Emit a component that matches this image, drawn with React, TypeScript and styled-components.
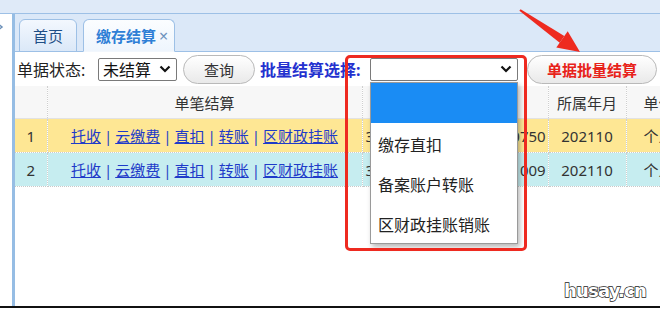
import React from 'react';
import styled, {createGlobalStyle} from 'styled-components';

const GlobalStyle = createGlobalStyle`
  html, body {
    margin: 0;
    padding: 0;
    background: #fff;
  }
  body {
    width: 660px;
    height: 312px;
    overflow: hidden;
    font-family: "Noto Sans", "Noto Sans CJK SC", sans-serif;
    font-size: 15px;
    color: #333;
  }
`;

const Page = styled.div`
  position: relative;
  width: 660px;
  height: 312px;
  display: flex;
  flex-direction: column;
  overflow: hidden;
`;

const TopStrip = styled.div`
  height: 13px;
  flex-shrink: 0;
  background: #dfeaf8;
  border-bottom: 1px solid #9dc0e6;
`;

const Body = styled.div`
  flex: 1;
  display: flex;
  min-height: 0;
`;

const Side = styled.div`
  width: 12px;
  flex-shrink: 0;
  background: #fff;
  overflow: hidden;
  padding-top: 3px;
  box-sizing: border-box;
`;

const Main = styled.div`
  flex: 1;
  min-width: 0;
  display: flex;
  flex-direction: column;
  border-left: 3px solid #96bde4;
`;

const TabBar = styled.div`
  height: 38px;
  box-sizing: border-box;
  padding: 5px 0 0 4px;
  display: flex;
  align-items: flex-end;
  gap: 6px;
  background: #dbe8f8;
  border-bottom: 1px solid #9dc0e6;
`;

const Tab = styled.div<{ $active?: boolean }>`
  height: 33px;
  box-sizing: border-box;
  margin-bottom: -1px;
  padding: ${p => (p.$active ? '0 6px 0 12px' : '0 13px')};
  display: flex;
  align-items: center;
  gap: 3px;
  border: 1px solid #9dc0e6;
  border-bottom: ${p => (p.$active ? '1px solid #f2f7fd' : '1px solid #9dc0e6')};
  border-radius: 6px 6px 0 0;
  background: ${p => (p.$active
    ? 'linear-gradient(#fbfdff, #eef5fd)'
    : 'linear-gradient(#f3f8fe, #dbe8f8)')};
  color: ${p => (p.$active ? '#2f7fd6' : '#1f4f86')};
  font-weight: ${p => (p.$active ? 700 : 400)};
  font-size: 15px;
`;

const TabClose = styled.span`
  color: #6e93bd;
  font-weight: 400;
  font-size: 16px;
`;

const Toolbar = styled.div`
  height: 34px;
  flex-shrink: 0;
  display: flex;
  align-items: center;
  padding-left: 2px;
  background: #fff;
`;

const Label = styled.span<{ $accent?: boolean; $width: number }>`
  width: ${p => p.$width}px;
  flex-shrink: 0;
  color: ${p => (p.$accent ? '#2431cf' : '#222')};
  font-weight: ${p => (p.$accent ? 700 : 400)};
  font-size: 16px;
  white-space: nowrap;
`;

const SelectBox = styled.div<{ $width: number; $gap: number }>`
  position: relative;
  width: ${p => p.$width}px;
  margin-right: ${p => p.$gap}px;
  flex-shrink: 0;
  height: 23px;
  box-sizing: border-box;
  display: flex;
  align-items: center;
  justify-content: space-between;
  padding: 0 5px 0 4px;
  border: 1px solid #7a7a7a;
  border-radius: 2px;
  background: #fff;
  color: #111;
  font-size: 16px;
`;

const Pill = styled.div<{ $danger?: boolean; $width: number; $gap?: number }>`
  width: ${p => p.$width}px;
  margin-right: ${p => p.$gap || 0}px;
  flex-shrink: 0;
  height: 29px;
  box-sizing: border-box;
  display: flex;
  align-items: center;
  justify-content: center;
  border: 1px solid #b9b9b9;
  border-radius: 15px;
  background: linear-gradient(#ffffff, #e9e9e9);
  color: ${p => (p.$danger ? '#e8221a' : '#333')};
  font-weight: ${p => (p.$danger ? 700 : 400)};
  font-size: 15px;
`;

const DropList = styled.div`
  position: absolute;
  left: -1px;
  top: 23px;
  width: 148px;
  box-sizing: border-box;
  border: 1px solid #9a9a9a;
  background: #fff;
  box-shadow: 2px 3px 5px rgba(0, 0, 0, 0.28);
  z-index: 3;
`;

const DropOption = styled.div<{ $selected?: boolean }>`
  height: 40px;
  display: flex;
  align-items: center;
  padding: 3px 0 0 7px;
  box-sizing: border-box;
  background: ${p => (p.$selected ? '#1a8cf4' : '#fff')};
  color: #222;
  font-size: 16px;
`;

const Grid = styled.table`
  border-collapse: collapse;
  table-layout: fixed;
  width: 700px;
  font-size: 15px;
`;

const HeadCell = styled.th<{ $align?: 'left' | 'center' }>`
  height: 32px;
  padding: 0 0 0 ${p => (p.$align === 'left' ? '17px' : '0')};
  font-weight: 400;
  color: #333;
  background: #f7f7f7;
  border-right: 1px dotted #cfcfcf;
  border-bottom: 1px solid #e2e2e2;
  text-align: ${p => p.$align || 'center'};
  white-space: nowrap;
  overflow: hidden;
`;

const Row = styled.tr<{ $tone: 'yellow' | 'cyan' }>`
  background: ${p => (p.$tone === 'yellow' ? '#fee794' : '#c6edf0')};
`;

const Cell = styled.td<{ $align?: 'left' | 'center' | 'right' }>`
  height: 33px;
  padding: 0 ${p => (p.$align === 'left' ? '0 0 17px' : '3px')};
  border-right: 1px dotted #cfcfcf;
  border-bottom: 1px dotted #c9c9c9;
  text-align: ${p => p.$align || 'center'};
  white-space: nowrap;
  overflow: hidden;
  color: #333;
`;

const Link = styled.a`
  color: #1f3bc9;
  text-decoration: underline;
  cursor: pointer;
`;

const Sep = styled.span`
  color: #2a44c6;
  margin: 0 3px;
`;

const Baseline = styled.div`
  height: 2px;
  flex-shrink: 0;
  background: #111;
  margin-bottom: 4px;
`;

const Highlight = styled.div`
  position: absolute;
  left: 345px;
  top: 55px;
  width: 182px;
  height: 196px;
  box-sizing: border-box;
  border: 3.5px solid #ee2a20;
  border-radius: 5px;
  z-index: 4;
  pointer-events: none;
`;

const Arrow = styled.svg`
  position: absolute;
  left: 512px;
  top: 2px;
  z-index: 4;
`;

const Watermark = styled.div`
  position: absolute;
  right: 14px;
  bottom: 11px;
  font-family: "DejaVu Sans", sans-serif;
  font-weight: 700;
  font-size: 18px;
  letter-spacing: -0.8px;
  color: #fff;
  -webkit-text-stroke: 1.4px #222;
  paint-order: stroke fill;
  z-index: 4;
`;

const Chevron = () => (
  <svg width="12" height="8" viewBox="0 0 12 8">
    <polyline points="1.5,1.5 6,6 10.5,1.5" fill="none" stroke="#111" strokeWidth="2.2"/>
  </svg>
);

const actions = ['托收', '云缴费', '直扣', '转账', '区财政挂账'];

const rows = [
  {no: 1, bill: '320104202110000000750', month: '202110', kind: '个人缴存', tone: 'yellow' as const},
  {no: 2, bill: '320104202110000001009', month: '202110', kind: '个人缴存', tone: 'cyan' as const},
];

export default function App() {
  return (
    <Page>
      <GlobalStyle/>
      <TopStrip/>
      <Body>
        <Side>
          <svg width="12" height="12" viewBox="0 0 12 12">
            <polyline points="-3,2 2,6 -3,10" fill="none" stroke="#6a8fb8" strokeWidth="1.5"/>
          </svg>
        </Side>
        <Main>
          <TabBar>
            <Tab>首页</Tab>
            <Tab $active>缴存结算<TabClose>×</TabClose></Tab>
          </TabBar>
          <Toolbar>
            <Label $width={81}>单据状态:</Label>
            <SelectBox $width={79} $gap={6}>未结算<Chevron/></SelectBox>
            <Pill $width={72} $gap={5}>查询</Pill>
            <Label $accent $width={110}>批量结算选择:</Label>
            <SelectBox $width={148} $gap={9}>
              <span/>
              <Chevron/>
              <DropList>
                <DropOption $selected/>
                <DropOption>缴存直扣</DropOption>
                <DropOption>备案账户转账</DropOption>
                <DropOption>区财政挂账销账</DropOption>
              </DropList>
            </SelectBox>
            <Pill $danger $width={130}>单据批量结算</Pill>
          </Toolbar>
          <Grid>
            <colgroup>
              <col style={{width: 32}}/>
              <col style={{width: 315}}/>
              <col style={{width: 186}}/>
              <col style={{width: 78}}/>
              <col style={{width: 89}}/>
            </colgroup>
            <thead>
              <tr>
                <HeadCell/>
                <HeadCell>单笔结算</HeadCell>
                <HeadCell>缴存单号</HeadCell>
                <HeadCell>所属年月</HeadCell>
                <HeadCell $align="left">单位类型</HeadCell>
              </tr>
            </thead>
            <tbody>
              {rows.map(r => (
                <Row key={r.no} $tone={r.tone}>
                  <Cell>{r.no}</Cell>
                  <Cell>
                    {actions.map((a, i) => (
                      <React.Fragment key={a}>
                        {i > 0 && <Sep>|</Sep>}
                        <Link>{a}</Link>
                      </React.Fragment>
                    ))}
                  </Cell>
                  <Cell $align="right">{r.bill}</Cell>
                  <Cell>{r.month}</Cell>
                  <Cell $align="left">{r.kind}</Cell>
                </Row>
              ))}
            </tbody>
          </Grid>
        </Main>
      </Body>
      <Baseline/>
      <Highlight/>
      <Arrow width="72" height="54" viewBox="0 0 72 54">
        <polygon points="7.4,8.8 8.6,7.2 52.3,34.1 47.7,40.7" fill="#ee2a20"/>
        <polygon points="68,50 44.3,45.6 55.7,29.2" fill="#ee2a20"/>
      </Arrow>
      <Watermark>husay.cn</Watermark>
    </Page>
  );
}
